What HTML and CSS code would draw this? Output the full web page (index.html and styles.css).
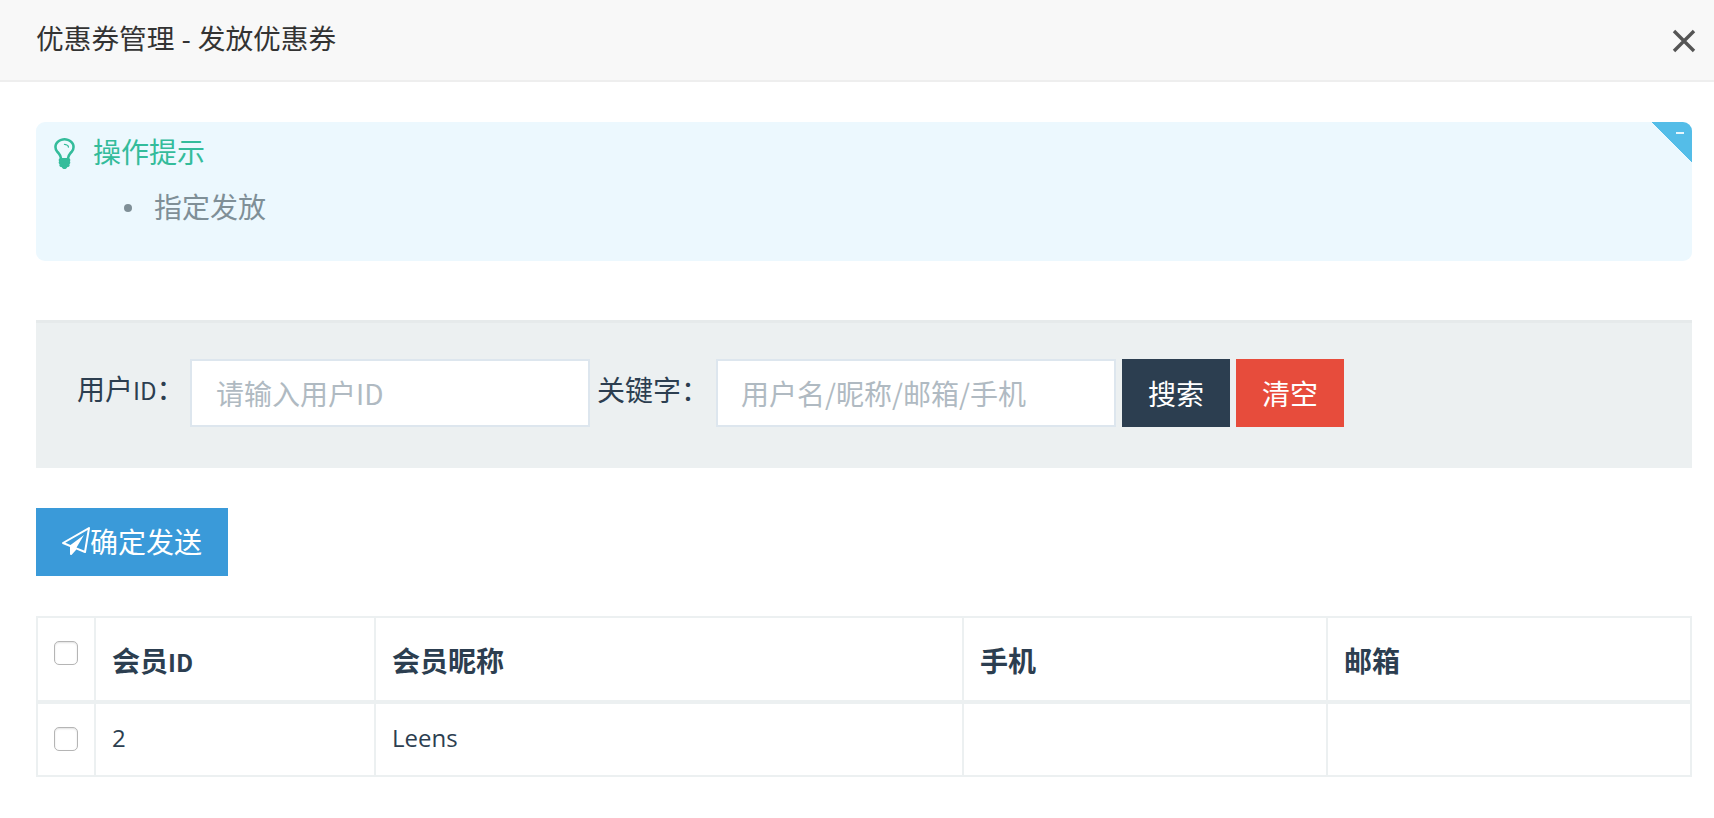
FILE: index.html
```html
<!DOCTYPE html>
<html lang="zh-CN">
<head>
<meta charset="utf-8">
<title>优惠券管理 - 发放优惠券</title>
<link rel="stylesheet" href="styles.css">
</head>
<body>
<header class="topbar">
  <h1 class="topbar-title">优惠券管理 - 发放优惠券</h1>
  <button class="close" type="button" aria-label="关闭">
    <svg class="close-icon" viewBox="0 0 24 24"><path d="M2 2L22 22M22 2L2 22"/></svg>
  </button>
</header>
<main class="content">
  <section class="tips">
    <span class="tips-corner"><span class="tips-minus"></span></span>
    <div class="tips-head">
      <svg class="bulb" viewBox="384 128 1024 1536"><path d="M1120 576q0 13-9.500 22.500t-22.500 9.500-22.500-9.500-9.500-22.500q0-46-54-71t-106-25q-13 0-22.500-9.500t-9.500-22.500 9.500-22.500 22.500-9.500q50 0 99.500 16t87 54 37.500 90zm160 0q0-72-34.500-134t-90-101.500-123-62-136.500-22.500-136.500 22.500-123 62-90 101.500-34.500 134q0 101 68 180 10 11 30.500 33t30.500 33q128 153 141 298h228q13-145 141-298 10-11 30.500-33t30.500-33q68-79 68-180zm128 0q0 155-103 268-45 49-74.500 87t-59.500 95.500-34 107.500q47 28 47 82 0 37-25 64 25 27 25 64 0 52-45 81 13 23 13 47 0 46-31.500 71t-77.500 25q-20 44-60 70t-87 26-87-26-60-70q-46 0-77.500-25t-31.500-71q0-24 13-47-45-29-45-81 0-37 25-64-25-27-25-64 0-54 47-82-4-50-34-107.500t-59.500-95.500-74.500-87q-103-113-103-268 0-99 44.500-184.500t117-142 164-89 186.500-32.500 186.500 32.500 164 89 117 142 44.500 184.500z"/></svg>
      <span class="tips-title">操作提示</span>
    </div>
    <ul class="tips-list">
      <li class="tips-item">指定发放</li>
    </ul>
  </section>

  <form class="search">
    <label class="search-label search-label-id">用户<span class="latin-id">ID</span>：</label>
    <input class="search-input" type="text" placeholder="请输入用户ID">
    <label class="search-label search-label-key">关键字：</label>
    <input class="search-input search-input-key" type="text" placeholder="用户名/昵称/邮箱/手机">
    <button class="btn btn-dark" type="button">搜索</button>
    <button class="btn btn-red" type="button">清空</button>
  </form>

  <button class="btn btn-blue" type="button">
    <svg class="plane" viewBox="0 0 1792 1792"><path d="M1764 11q33 24 27 64l-256 1536q-5 29-32 45-14 8-31 8-11 0-24-5l-527-215-298 327q-18 21-47 21-14 0-23-4-19-7-30-23.500t-11-36.500v-452l-472-193q-37-14-40-55-3-39 32-59l1664-960q35-21 68 2zm-342 1499l221-1323-1434 827 336 137 863-639-478 797z"/></svg>确定发送
  </button>

  <table class="members">
    <thead>
      <tr>
        <th class="col-check"><input class="check" type="checkbox"></th>
        <th class="col-id">会员<span class="latin-id">ID</span></th>
        <th class="col-nick">会员昵称</th>
        <th class="col-phone">手机</th>
        <th class="col-mail">邮箱</th>
      </tr>
    </thead>
    <tbody>
      <tr>
        <td><input class="check" type="checkbox"></td>
        <td class="latin">2</td>
        <td class="latin">Leens</td>
        <td></td>
        <td></td>
      </tr>
    </tbody>
  </table>
</main>
</body>
</html>
```
FILE: styles.css
```css
* { box-sizing: border-box; }
html, body { margin: 0; padding: 0; background: #fff; }
body {
  font-family: "Open Sans", "Noto Sans CJK SC", sans-serif;
  font-size: 28px;
  color: #2c3e50;
  overflow: hidden;
}
.latin { font-size: 24px; }
.latin-id { font-family: "Noto Sans CJK SC", sans-serif; font-size: 24px; }
.topbar {
  height: 82px;
  background: #f8f8f8;
  border-bottom: 2px solid #eee;
  display: flex;
  align-items: center;
  justify-content: space-between;
  padding: 0 18px 2px 36px;
}
.topbar-title {
  margin: 0 0 2px;
  font-size: 27.7px;
  font-weight: 400;
  color: #333;
  line-height: 40px;
}
.close {
  border: 0;
  background: none;
  padding: 0;
  margin-top: 4px;
  display: flex;
}
.close-icon { width: 24px; height: 24px; fill: none; stroke: #555; stroke-width: 3.4; }
.content { padding: 40px 22px 0 36px; }

.tips {
  position: relative;
  height: 139px;
  background: #ecf8fe;
  border-radius: 9px;
  overflow: hidden;
  padding: 12px 0 0 18px;
}
.tips-corner {
  position: absolute;
  top: 0;
  right: 0;
  width: 40px;
  height: 40px;
  background: linear-gradient(to top right, transparent 50%, #54bde8 50%);
}
.tips-minus {
  position: absolute;
  top: 10px;
  right: 8px;
  width: 8px;
  height: 2px;
  background: #e6f6fd;
}
.tips-head { display: flex; align-items: center; height: 37px; }
.bulb { width: 21px; height: 31px; fill: #34bc9b; margin-top: 2px; }
.tips-title { margin-left: 18px; color: #34bc9b; line-height: 37px; }
.tips-list {
  margin: 18px 0 0;
  padding: 0 0 0 70px;
  color: #7f8f97;
  line-height: 37px;
  list-style: none;
}
.tips-item { display: flex; align-items: center; }
.tips-item::before {
  content: "";
  width: 8px;
  height: 8px;
  border-radius: 50%;
  background: #7f8f97;
  margin-right: 22px;
}

.search {
  margin-top: 59px;
  height: 148px;
  background: #ecf0f1;
  border-top: 3px solid #e6eaeb;
  display: flex;
  align-items: center;
  padding: 0 0 6px 41px;
}
.search-label { line-height: 40px; margin-top: -6px; }
.search-label-id { width: 113px; }
.search-label-key { width: 119px; margin-left: 7px; }
.search-input {
  width: 400px;
  height: 68px;
  border: 2px solid #dde6ee;
  background: #fff;
  font: inherit;
  font-family: "Noto Sans CJK SC", sans-serif;
  padding: 0 24px;
  outline: 0;
  border-radius: 0;
}
.search-input-key { width: 400px; padding: 0 23px; }
.search-input::placeholder { color: #b0bac2; opacity: 1; }
.btn {
  height: 68px;
  border: 0;
  border-radius: 0;
  color: #fff;
  font: inherit;
  padding: 0;
  display: flex;
  align-items: center;
  justify-content: center;
}
.btn-dark { width: 108px; margin-left: 6px; background: #2c3e50; }
.btn-red { width: 108px; margin-left: 6px; background: #e74c3c; }
.btn-blue { width: 192px; margin-top: 40px; padding-bottom: 3px; background: #3a9ad9; }
.plane { width: 28px; height: 28px; fill: #fff; }

.members {
  width: 1656px;
  margin-top: 40px;
  border-collapse: collapse;
  table-layout: fixed;
}
.members th, .members td {
  border: 2px solid #ecf0f1;
  padding: 0 16px;
  text-align: left;
}
.members th { height: 85px; font-weight: 600; border-bottom-width: 4px; padding-top: 2px; }
.members td { height: 74px; padding-bottom: 5px; }
.members td:first-child, .members th:first-child { padding: 0 0 0 16px; }
.col-check { width: 58px; }
.col-id { width: 280px; }
.col-nick { width: 588px; }
.col-phone { width: 364px; }
.col-mail { width: 364px; }
.check {
  appearance: none;
  display: block;
  width: 24px;
  height: 24px;
  margin: -2px 0 0;
  border: 1px solid #b5b5b5;
  border-radius: 5px;
  background: #fff;
  box-shadow: inset 0 1px 2px rgba(0,0,0,.12);
}
.members th .check { margin-top: -13px; }
```
